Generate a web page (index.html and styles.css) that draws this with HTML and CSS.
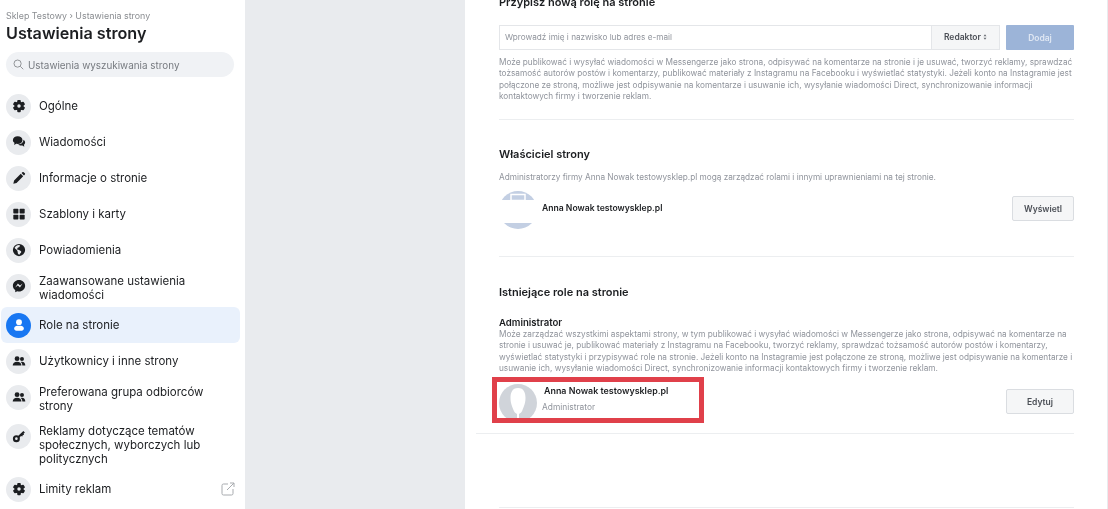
FILE: index.html
```html
<!DOCTYPE html>
<html lang="pl">
<head>
<title>Ustawienia strony</title>
<meta charset="UTF-8">
<link rel="stylesheet" href="styles.css">
</head>
<body>
<svg class="defs" width="0" height="0">
  <defs>
    <g id="gear">
      <rect x="6" y="1" width="4" height="14" rx="1"/>
      <rect x="6" y="1" width="4" height="14" rx="1" transform="rotate(60 8 8)"/>
      <rect x="6" y="1" width="4" height="14" rx="1" transform="rotate(120 8 8)"/>
      <circle cx="8" cy="8" r="5.200"/>
      <circle cx="8" cy="8" r="2" fill="#e9ebee"/>
    </g>
    <g id="people">
      <circle cx="5.800" cy="5.300" r="2.800"/>
      <circle cx="11.400" cy="5.800" r="2.300"/>
      <path d="M.8 13c0-2.500 2-4.200 5-4.200s5 1.700 5 4.200H.8z"/>
      <path d="M11.800 13c0-1.700-.6-3-1.800-4 .5-.1 1-.2 1.500-.2 2.200 0 3.700 1.600 3.700 4.200z"/>
    </g>
  </defs>
</svg>
<div class="page">

  <aside class="sidebar">
    <div class="crumbs">Sklep Testowy › Ustawienia strony</div>
    <h1 class="sideTitle">Ustawienia strony</h1>
    <div class="search">
      <svg class="searchIcon" viewBox="0 0 12 12"><circle cx="5" cy="5" r="3.900"/><path d="M8 8l3.200 3.200"/></svg>
      <span>Ustawienia wyszukiwania strony</span>
    </div>
    <nav class="menu">
      <div class="item">
        <span class="ico"><svg viewBox="0 0 16 16"><use href="#gear"/></svg></span>
        <span class="label">Ogólne</span>
      </div>
      <div class="item">
        <span class="ico"><svg viewBox="0 0 16 16"><path d="M6.500 1.500c3 0 5.500 1.900 5.500 4.400s-2.500 4.400-5.500 4.400c-.6 0-1.200-.1-1.700-.2L2.500 11.500l.3-2.600C1.700 8.100 1 7.100 1 5.900c0-2.500 2.500-4.400 5.500-4.400z"/><path d="M13 5.500c1.300.7 2 1.800 2 3 0 1-.5 1.900-1.300 2.600l.3 2.400-2.200-1.500c-1.800.4-3.800-.1-4.800-1.300 3.300 0 6-2 6-4.700z"/></svg></span>
        <span class="label">Wiadomości</span>
      </div>
      <div class="item">
        <span class="ico"><svg viewBox="0 0 16 16"><path d="M1.500 14.500l.9-3.700 7.600-7.600 2.800 2.800-7.600 7.600zM10.900 2.300l1-1c.4-.4 1-.4 1.400 0l1.400 1.400c.4.400.4 1 0 1.400l-1 1z"/></svg></span>
        <span class="label">Informacje o stronie</span>
      </div>
      <div class="item">
        <span class="ico"><svg viewBox="0 0 16 16"><rect x="1.500" y="2" width="5.800" height="5.500" rx=".8"/><rect x="8.700" y="2" width="5.800" height="5.500" rx=".8"/><rect x="1.500" y="8.800" width="5.800" height="5.500" rx=".8"/><rect x="8.700" y="8.800" width="5.800" height="5.500" rx=".8"/></svg></span>
        <span class="label">Szablony i karty</span>
      </div>
      <div class="item">
        <span class="ico"><svg viewBox="0 0 16 16"><path fill-rule="evenodd" d="M8 1a7 7 0 1 1 0 14A7 7 0 0 1 8 1zM3 5.500c.5 1.500 2 1.500 2.500 2.500s1 1 1 2.500 1 2.500 2 3c0-1 1.500-2 2-3s-1-2-2.500-2.500S6 8 6 6.500 8 5 8.500 4.500 8.500 3 9 2.500C6.500 2 4 3.500 3 5.500z"/></svg></span>
        <span class="label">Powiadomienia</span>
      </div>
      <div class="item">
        <span class="ico"><svg viewBox="0 0 16 16"><path fill-rule="evenodd" d="M8 1c3.900 0 7 2.900 7 6.600s-3.100 6.600-7 6.600c-.7 0-1.400-.1-2-.3L3.700 15v-2.500C2 11.300 1 9.600 1 7.600 1 3.900 4.100 1 8 1zM3.700 9.800l3-4.700 2.500 2.300 2.900-2.300-3 4.700-2.500-2.300z"/></svg></span>
        <span class="label">Zaawansowane ustawienia wiadomości</span>
      </div>
      <div class="item current">
        <span class="ico"><svg viewBox="0 0 16 16"><circle cx="8" cy="4.800" r="3.300"/><path d="M2.500 12c0-2 1.800-3.200 3.500-3.200h4c1.700 0 3.500 1.200 3.500 3.200 0 1.500-1 2.500-2.500 2.500H5c-1.500 0-2.500-1-2.500-2.500z"/></svg></span>
        <span class="label">Role na stronie</span>
      </div>
      <div class="item">
        <span class="ico"><svg viewBox="0 0 16 16"><use href="#people"/></svg></span>
        <span class="label">Użytkownicy i inne strony</span>
      </div>
      <div class="item">
        <span class="ico"><svg viewBox="0 0 16 16"><use href="#people"/></svg></span>
        <span class="label">Preferowana grupa odbiorców strony</span>
      </div>
      <div class="item">
        <span class="ico"><svg viewBox="0 0 16 16"><path fill-rule="evenodd" d="M5 7a4 4 0 1 1 0 8 4 4 0 0 1 0-8zm0 2.500a1.500 1.500 0 1 0 0 3 1.500 1.500 0 0 0 0-3z"/><path d="M6.600 8.200l6.400-6 1.700 1.700-1.500 1.500.6 1.200-1.600.6-.4 1.400-1.500-.6-2.300 2.200z"/></svg></span>
        <span class="label">Reklamy dotyczące tematów społecznych, wyborczych lub politycznych</span>
      </div>
      <div class="item">
        <span class="ico"><svg viewBox="0 0 16 16"><use href="#gear"/></svg></span>
        <span class="label">Limity reklam</span>
        <svg class="extIcon" viewBox="0 0 14 14"><path d="M7 2H2.500A1.500 1.500 0 0 0 1 3.500v8A1.500 1.500 0 0 0 2.500 13h8a1.500 1.500 0 0 0 1.500-1.500V7"/><path d="M6 8l7-7M9 1h4v4"/></svg>
      </div>
    </nav>
  </aside>

  <div class="gutter"></div>

  <main class="content">
    <section class="block newRole">
      <h2 class="blockTitle">Przypisz nową rolę na stronie</h2>
      <div class="roleForm">
        <div class="nameInput">
          <span class="placeholder">Wprowadź imię i nazwisko lub adres e-mail</span>
          <span class="roleSelect">Redaktor <svg class="updown" viewBox="0 0 6 8"><path d="M3 0l2.200 3H.8zM3 8L.8 5h4.400z"/></svg></span>
        </div>
        <button class="addBtn">Dodaj</button>
      </div>
      <p class="hint">Może publikować i wysyłać wiadomości w Messengerze jako strona, odpisywać na komentarze na stronie i je usuwać, tworzyć reklamy, sprawdzać tożsamość autorów postów i komentarzy, publikować materiały z Instagramu na Facebooku i wyświetlać statystyki. Jeżeli konto na Instagramie jest połączone ze stroną, możliwe jest odpisywanie na komentarze i usuwanie ich, wysyłanie wiadomości Direct, synchronizowanie informacji kontaktowych firmy i tworzenie reklam.</p>
    </section>

    <section class="block owner">
      <h2 class="blockTitle">Właściciel strony</h2>
      <p class="hint">Administratorzy firmy Anna Nowak testowysklep.pl mogą zarządzać rolami i innymi uprawnieniami na tej stronie.</p>
      <div class="person">
        <svg class="avatar" viewBox="0 0 38 38"><circle cx="19" cy="19" r="19" fill="#c3cfe3"/><rect x="0" y="9" width="38" height="23" rx="2" fill="#fff"/><rect x="12" y="3.500" width="14" height="6" fill="none" stroke="#fff" stroke-width="1.500"/></svg>
        <div class="personName">Anna Nowak testowysklep.pl</div>
        <button class="btn viewBtn">Wyświetl</button>
      </div>
    </section>

    <section class="block roles">
      <h2 class="blockTitle">Istniejące role na stronie</h2>
      <h3 class="roleName">Administrator</h3>
      <p class="hint">Może zarządzać wszystkimi aspektami strony, w tym publikować i wysyłać wiadomości w Messengerze jako strona, odpisywać na komentarze na stronie i usuwać je, publikować materiały z Instagramu na Facebooku, tworzyć reklamy, sprawdzać tożsamość autorów postów i komentarzy, wyświetlać statystyki i przypisywać role na stronie. Jeżeli konto na Instagramie jest połączone ze stroną, możliwe jest odpisywanie na komentarze i usuwanie ich, wysyłanie wiadomości Direct, synchronizowanie informacji kontaktowych firmy i tworzenie reklam.</p>
      <div class="person admin">
        <svg class="avatar" viewBox="0 0 38 38"><circle cx="19" cy="19" r="19" fill="#d0d4da"/><path d="M19 4c6 0 7.500 5 7.500 10 0 6-2.500 10-3 12-.5 2-2 3-3.500 4v8h-2v-8c-1.500-1-3-2-3.500-4-.5-2-3-6-3-12C11.500 9 13 4 19 4z" fill="#fff"/></svg>
        <div class="personText">
          <div class="personName">Anna Nowak testowysklep.pl</div>
          <div class="personRole">Administrator</div>
        </div>
        <button class="btn editBtn">Edytuj</button>
        <div class="redBox"></div>
      </div>
    </section>

    <div class="block tail"></div>
  </main>

  <div class="scrollEdge"></div>
</div>
</body>
</html>
```

FILE: styles.css
```css
html, body {
  margin: 0;
  padding: 0;
  height: 100%;
  overflow: hidden;
  font-family: "Inter", "Liberation Sans", sans-serif;
  color: #1c1e21;
}

.defs {
  display: block;
}

.page {
  display: flex;
  height: 509px;
  overflow: hidden;
  filter: blur(0.45px);
}

/* left column */
.sidebar {
  width: 245px;
  flex: none;
  background: #fff;
  box-sizing: border-box;
  padding: 11px 5px 0 0;
}
.crumbs {
  margin-left: 6px;
  font-size: 8.900px;
  line-height: 10px;
  color: #8a8d91;
}
.sideTitle {
  margin: 1px 0 0 6px;
  font-size: 16.200px;
  line-height: 22px;
  font-weight: 600;
  color: #1c1e21;
}
.search {
  display: flex;
  align-items: center;
  gap: 4px;
  margin: 8px 6px 0 6px;
  height: 25px;
  padding-left: 7px;
  border-radius: 13px;
  background: #f0f2f5;
  font-size: 9.900px;
  color: #777b80;
}
.searchIcon {
  width: 11px;
  height: 11px;
  fill: none;
  stroke: #8a8d91;
  stroke-width: 1;
}
.menu {
  margin-top: 11px;
}
.item {
  display: flex;
  gap: 8px;
  margin-left: 1px;
  padding: 5.500px 5px;
  border-radius: 6px;
  font-size: 11.500px;
  line-height: 14px;
  color: #1c1e21;
}
.item.current {
  background: #e9f1fc;
}
.ico {
  flex: none;
  display: flex;
  align-items: center;
  justify-content: center;
  width: 25px;
  height: 25px;
  border-radius: 50%;
  background: #e9ebee;
}
.ico svg {
  width: 14px;
  height: 14px;
  fill: #1c1e21;
}
.current .ico {
  background: #1877f2;
}
.current .ico svg {
  fill: #fff;
}
.label {
  flex: 1;
  align-self: center;
}
.extIcon {
  flex: none;
  align-self: center;
  width: 14px;
  height: 14px;
  fill: none;
  stroke: #a8abaf;
  stroke-width: 1;
}

.gutter {
  width: 220px;
  flex: none;
  background: #e9ebee;
}

/* right panel */
.content {
  width: 642px;
  flex: none;
  box-sizing: border-box;
  height: 509px;
  padding: 0 33px 0 34px;
  background: #fff;
  overflow: hidden;
}
.scrollEdge {
  flex: 1;
  background: #e9ebee;
}
.block {
  border-bottom: 1px solid #eceef0;
}
.blockTitle {
  margin: 0;
  font-size: 11px;
  line-height: 14px;
  font-weight: 600;
  color: #1c1e21;
}
.hint {
  margin: 0;
  font-size: 8.240px;
  line-height: 11.300px;
  color: #90949c;
}

.newRole {
  margin-top: -5px;
  height: 124px;
}
.roleForm {
  display: flex;
  gap: 6px;
  margin-top: 16px;
  margin-bottom: 7px;
}
.nameInput {
  flex: 1;
  display: flex;
  height: 25px;
  box-sizing: border-box;
  border: 1px solid #e4e6e9;
}
.placeholder {
  flex: 1;
  padding-left: 5px;
  font-size: 8.200px;
  line-height: 23px;
  color: #90949c;
}
.roleSelect {
  width: 68px;
  box-sizing: border-box;
  border-left: 1px solid #e4e6e9;
  background: #f5f6f7;
  font-size: 8.500px;
  font-weight: 600;
  line-height: 23px;
  text-align: center;
  color: #4b4f56;
}
.updown {
  width: 4px;
  height: 6px;
  fill: #6b6f76;
}
.addBtn {
  width: 68px;
  height: 25px;
  border: 0;
  border-radius: 1px;
  background: #9cb4d8;
  color: #dfe7f3;
  font: 600 8.500px "Inter", "Liberation Sans", sans-serif;
}

.owner {
  height: 137px;
  padding-top: 27px;
  box-sizing: border-box;
}
.owner .hint {
  margin-top: 11px;
}
.person {
  display: flex;
  align-items: flex-start;
  position: relative;
}
.owner .person {
  margin-top: 8px;
}
.avatar {
  flex: none;
  width: 38px;
  height: 38px;
}
.personName {
  font-size: 8.600px;
  font-weight: 600;
  line-height: 12px;
  color: #1c1e21;
}
.owner .personName {
  flex: 1;
  margin: 11px 0 0 5px;
}
.btn {
  height: 25px;
  margin-top: 5px;
  box-sizing: border-box;
  border: 1px solid #dadde1;
  border-radius: 2px;
  background: #f5f6f7;
  color: #4b4f56;
  font: 600 8.500px "Inter", "Liberation Sans", sans-serif;
}
.viewBtn {
  width: 62px;
}
.editBtn {
  width: 68px;
}

.roles {
  margin-left: -23px;
  padding: 28px 0 0 23px;
  height: 177px;
  box-sizing: border-box;
}
.roleName {
  margin: 18px 0 0;
  font-size: 9.600px;
  line-height: 11px;
  font-weight: 600;
  color: #1c1e21;
}
.roles .hint {
  margin-top: 1px;
}
.admin {
  margin-top: 10px;
  height: 38px;
}
.personText {
  flex: 1;
  margin-left: 5px;
}
.admin .personName {
  margin: 1px 0 0 2px;
  font-size: 8.900px;
}
.personRole {
  margin-top: 4.500px;
  font-size: 8.400px;
  line-height: 11px;
  color: #90949c;
}

.tail {
  height: 73px;
}

/* annotation drawn over the row */
.redBox {
  position: absolute;
  left: -7px;
  top: -7px;
  width: 212px;
  height: 46px;
  box-sizing: border-box;
  border: 5px solid #e0404a;
}
```
